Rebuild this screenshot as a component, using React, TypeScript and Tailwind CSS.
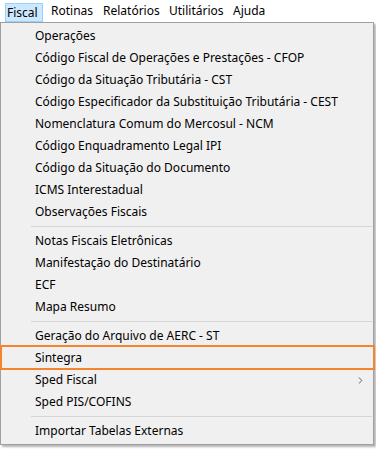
import { ChevronRight } from "lucide-react";

type Entry = { label: string; sub?: boolean; marked?: boolean } | "sep";

const entries: Entry[] = [
  { label: "Operações" },
  { label: "Código Fiscal de Operações e Prestações - CFOP" },
  { label: "Código da Situação Tributária - CST" },
  { label: "Código Especificador da Substituição Tributária - CEST" },
  { label: "Nomenclatura Comum do Mercosul - NCM" },
  { label: "Código Enquadramento Legal IPI" },
  { label: "Código da Situação do Documento" },
  { label: "ICMS Interestadual" },
  { label: "Observações Fiscais" },
  "sep",
  { label: "Notas Fiscais Eletrônicas" },
  { label: "Manifestação do Destinatário" },
  { label: "ECF" },
  { label: "Mapa Resumo" },
  "sep",
  { label: "Geração do Arquivo de AERC - ST" },
  { label: "Sintegra", marked: true },
  { label: "Sped Fiscal", sub: true },
  { label: "Sped PIS/COFINS" },
  "sep",
  { label: "Importar Tabelas Externas" },
];

export default function App() {
  return (
    <div
      className="w-[376px] h-[449px] bg-white text-[12px] text-black overflow-hidden"
      style={{ fontFamily: '"Noto Sans", "Open Sans", sans-serif' }}
    >
      {/* menu bar */}
      <div className="h-[22px] flex items-center">
        <div className="ml-[5px] mt-[3px] h-[19px] w-[38px] pl-[1px] border border-[#99d1ff] bg-[#cce8ff] flex items-center">
          Fiscal
        </div>
        <span className="ml-[8px] w-[52px]">Rotinas</span>
        <span className="w-[66px]">Relatórios</span>
        <span className="w-[64px]">Utilitários</span>
        <span>Ajuda</span>
      </div>

      {/* dropdown */}
      <div className="w-[374px] border border-[#a0a0a0] bg-[#f0f0f0] py-[2px] shadow-[2px_2px_2px_rgba(0,0,0,0.3)]">
        {entries.map((e, i) =>
          e === "sep" ? (
            <div key={i} className="h-[7px] flex items-center pl-[30px] pr-[1px]">
              <div className="h-px w-full bg-[#d5d5d5]" />
            </div>
          ) : (
            <div key={i} className="relative h-[22px] flex items-center pl-[34px] pr-[7px]">
              <span className="flex-1 leading-none pb-[1px]">{e.label}</span>
              {e.sub && <ChevronRight size={11} strokeWidth={1.6} className="text-[#333]" />}
              {e.marked && (
                <div className="absolute -left-[1px] -right-[2px] -top-[2px] -bottom-[1px] border-2 border-[#f7842c]" />
              )}
            </div>
          )
        )}
      </div>
    </div>
  );
}
